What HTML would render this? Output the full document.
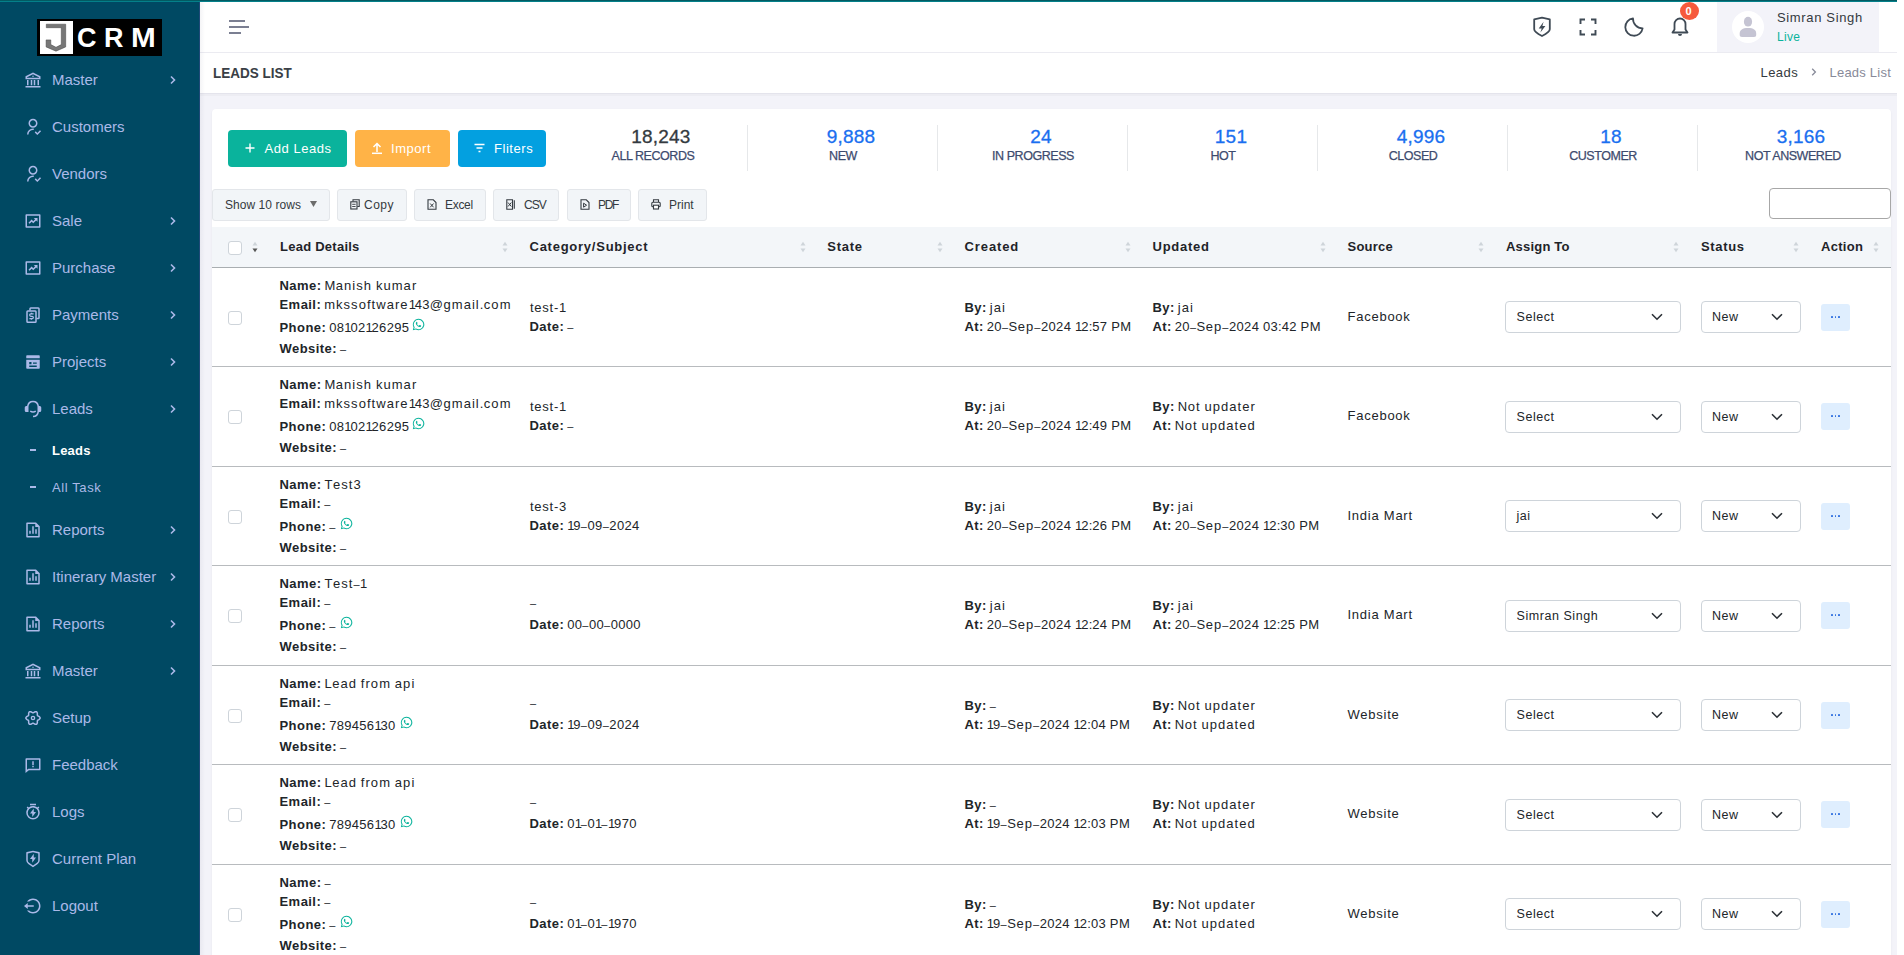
<!DOCTYPE html>
<html><head><meta charset="utf-8"><title>Leads List</title>
<style>
html,body{margin:0;padding:0;width:1904px;height:955px;overflow:hidden;background:#fff;}
body{position:relative;font-family:"Liberation Sans",sans-serif;}
.r{position:absolute;display:block;}
.t{position:absolute;white-space:nowrap;line-height:1;}
.c{text-align:center;white-space:nowrap;}
b{font-weight:700;}
</style></head><body>
<div class="r" style="left:0px;top:0px;width:200px;height:955px;background:#004963"></div>
<div class="r" style="left:200px;top:2px;width:1697px;height:953px;background:#f3f3f9"></div>
<div class="r" style="left:200px;top:2px;width:1697px;height:50px;background:#fff"></div>
<div class="r" style="left:200px;top:52px;width:1697px;height:1px;background:#ebebf1"></div>
<div class="r" style="left:200px;top:53px;width:1697px;height:40px;background:#fff"></div>
<div class="r" style="left:200px;top:93px;width:1697px;height:1px;background:#e4e4ec"></div>
<div class="r" style="left:200px;top:94px;width:1697px;height:2px;background:#ededf3"></div>
<div class="r" style="left:0px;top:0px;width:1897px;height:1px;background:#035a62"></div>
<div class="r" style="left:0px;top:1px;width:1897px;height:1px;background:#04808a"></div>
<div class="r" style="left:199px;top:2px;width:1px;height:953px;background:#1f4a78"></div>
<div class="r" style="left:200px;top:2px;width:5px;height:953px;background:linear-gradient(90deg,rgba(40,40,80,0.05),rgba(40,40,80,0))"></div>
<div class="r" style="left:37px;top:19px;width:125px;height:37px;background:#000"></div>
<div class="r" style="left:40px;top:21px;width:32.5px;height:32.5px;background:#fff"></div>
<svg class="r" style="left:38px;top:19px;" width="38" height="37" viewBox="38 19 38 37"><path d="M46.3 24.2 H65.7 V46.9 L56 51.2 L46.1 46.9 V39.9 H50.8 V44.6 L56 47.3 L61.3 44.6 V27.7 H46.3 Z" fill="#777" stroke="#444" stroke-width="0.5"/></svg>
<div class="t " style="left:77px;top:25px;font-size:27px;font-weight:700;color:#fff;letter-spacing:0px;">C</div>
<div class="t " style="left:104px;top:25px;font-size:27px;font-weight:700;color:#fff;letter-spacing:0px;">R</div>
<div class="t " style="left:131px;top:25px;font-size:27px;font-weight:700;color:#fff;letter-spacing:0px;transform:scaleX(1.1);transform-origin:0 0;">M</div>
<div class="t " style="left:52px;top:72px;font-size:15px;color:#abb9e8;">Master</div>
<svg class="r" style="left:24px;top:71px;color:#abb9e8" width="18" height="18" viewBox="0 0 24 24"><path fill="currentColor" d="M2 20h20v2H2v-2zm2-8h2v7H4v-7zm5 0h2v7H9v-7zm4 0h2v7h-2v-7zm5 0h2v7h-2v-7zM2 7l10-5 10 5v4H2V7zm2 1.236V9h16v-.764l-8-4-8 4zM12 8a1 1 0 1 1 0-2 1 1 0 0 1 0 2z"/></svg>
<svg class="r" style="left:168px;top:75px;" width="10" height="10" viewBox="0 0 10 10"><path d="M3 1.5 L6.5 5 L3 8.5" fill="none" stroke="#abb9e8" stroke-width="1.6"/></svg>
<div class="t " style="left:52px;top:119px;font-size:15px;color:#abb9e8;">Customers</div>
<svg class="r" style="left:24px;top:118px;color:#abb9e8" width="18" height="18" viewBox="0 0 24 24"><path fill="currentColor" d="M13 14.062v2.013A6 6 0 0 0 6 22H4a8 8 0 0 1 9-7.938zM12 13c-3.315 0-6-2.685-6-6s2.685-6 6-6 6 2.685 6 6-2.685 6-6 6zm0-2c2.21 0 4-1.79 4-4s-1.79-4-4-4-4 1.79-4 4 1.79 4 4 4zm5.793 8.914l3.535-3.535 1.415 1.414-4.95 4.95-3.536-3.536 1.415-1.414 2.12 2.121z"/></svg>
<div class="t " style="left:52px;top:166px;font-size:15px;color:#abb9e8;">Vendors</div>
<svg class="r" style="left:24px;top:165px;color:#abb9e8" width="18" height="18" viewBox="0 0 24 24"><path fill="currentColor" d="M13 14.062v2.013A6 6 0 0 0 6 22H4a8 8 0 0 1 9-7.938zM12 13c-3.315 0-6-2.685-6-6s2.685-6 6-6 6 2.685 6 6-2.685 6-6 6zm0-2c2.21 0 4-1.79 4-4s-1.79-4-4-4-4 1.79-4 4 1.79 4 4 4zm5.793 8.914l3.535-3.535 1.415 1.414-4.95 4.95-3.536-3.536 1.415-1.414 2.12 2.121z"/></svg>
<div class="t " style="left:52px;top:213px;font-size:15px;color:#abb9e8;">Sale</div>
<svg class="r" style="left:24px;top:212px;color:#abb9e8" width="18" height="18" viewBox="0 0 24 24"><path fill="currentColor" d="M4 5v14h16V5H4zM3 3h18a1 1 0 0 1 1 1v16a1 1 0 0 1-1 1H3a1 1 0 0 1-1-1V4a1 1 0 0 1 1-1zm11.793 6.793L13 8h5v5l-1.793-1.793-3.864 3.864-2.121-2.121-2.829 2.828-1.414-1.414 4.243-4.243 2.121 2.122 2.45-2.45z"/></svg>
<svg class="r" style="left:168px;top:216px;" width="10" height="10" viewBox="0 0 10 10"><path d="M3 1.5 L6.5 5 L3 8.5" fill="none" stroke="#abb9e8" stroke-width="1.6"/></svg>
<div class="t " style="left:52px;top:260px;font-size:15px;color:#abb9e8;">Purchase</div>
<svg class="r" style="left:24px;top:259px;color:#abb9e8" width="18" height="18" viewBox="0 0 24 24"><path fill="currentColor" d="M4 5v14h16V5H4zM3 3h18a1 1 0 0 1 1 1v16a1 1 0 0 1-1 1H3a1 1 0 0 1-1-1V4a1 1 0 0 1 1-1zm11.793 6.793L13 8h5v5l-1.793-1.793-3.864 3.864-2.121-2.121-2.829 2.828-1.414-1.414 4.243-4.243 2.121 2.122 2.45-2.45z"/></svg>
<svg class="r" style="left:168px;top:263px;" width="10" height="10" viewBox="0 0 10 10"><path d="M3 1.5 L6.5 5 L3 8.5" fill="none" stroke="#abb9e8" stroke-width="1.6"/></svg>
<div class="t " style="left:52px;top:307px;font-size:15px;color:#abb9e8;">Payments</div>
<svg class="r" style="left:24px;top:306px;color:#abb9e8" width="18" height="18" viewBox="0 0 24 24"><g fill="none" stroke="currentColor" stroke-width="2"><path d="M8 6V3.5a1 1 0 0 1 1-1h10a1 1 0 0 1 1 1v12a1 1 0 0 1-1 1h-2.5"/><rect x="4" y="6.5" width="12" height="15" rx="1"/></g><path fill="none" stroke="currentColor" stroke-width="1.7" d="M12.8 10.6H9.1A1.55 1.55 0 0 0 9.1 13.7H10.9A1.55 1.55 0 0 1 10.9 16.8H7.2M10 9V10.6M10 16.8V18.4"/></svg>
<svg class="r" style="left:168px;top:310px;" width="10" height="10" viewBox="0 0 10 10"><path d="M3 1.5 L6.5 5 L3 8.5" fill="none" stroke="#abb9e8" stroke-width="1.6"/></svg>
<div class="t " style="left:52px;top:354px;font-size:15px;color:#abb9e8;">Projects</div>
<svg class="r" style="left:24px;top:353px;color:#abb9e8" width="18" height="18" viewBox="0 0 24 24"><path fill="currentColor" fill-rule="evenodd" d="M4 3h16a1 1 0 0 1 1 1v3H3V4a1 1 0 0 1 1-1zM3 9h18v11a1 1 0 0 1-1 1H4a1 1 0 0 1-1-1V9zm4 3v3h3v-3H7zm5 0.8v1.6h5v-1.6h-5zM7 16.8v1.7h10v-1.7H7z"/></svg>
<svg class="r" style="left:168px;top:357px;" width="10" height="10" viewBox="0 0 10 10"><path d="M3 1.5 L6.5 5 L3 8.5" fill="none" stroke="#abb9e8" stroke-width="1.6"/></svg>
<div class="t " style="left:52px;top:401px;font-size:15px;color:#abb9e8;">Leads</div>
<svg class="r" style="left:24px;top:400px;color:#abb9e8" width="18" height="18" viewBox="0 0 24 24"><path fill="currentColor" d="M21 8a2 2 0 0 1 2 2v4a2 2 0 0 1-2 2h-1.062A8.001 8.001 0 0 1 12 23v-2a6 6 0 0 0 6-6V9A6 6 0 1 0 6 9v7H3a2 2 0 0 1-2-2v-4a2 2 0 0 1 2-2h1.062a8.001 8.001 0 0 1 15.876 0H21zM7.76 15.785l1.06-1.696A5.972 5.972 0 0 0 12 15a5.972 5.972 0 0 0 3.18-.911l1.06 1.696A7.963 7.963 0 0 1 12 17a7.963 7.963 0 0 1-4.24-1.215z"/></svg>
<svg class="r" style="left:168px;top:404px;" width="10" height="10" viewBox="0 0 10 10"><path d="M3 1.5 L6.5 5 L3 8.5" fill="none" stroke="#abb9e8" stroke-width="1.6"/></svg>
<div class="t " style="left:52px;top:522px;font-size:15px;color:#abb9e8;">Reports</div>
<svg class="r" style="left:24px;top:521px;color:#abb9e8" width="18" height="18" viewBox="0 0 24 24"><path fill="currentColor" d="M11 7h2v10h-2V7zm4 4h2v6h-2v-6zm-8 2h2v4H7v-4zm8-9H5v16h14V8h-4V4zM3 2.992C3 2.444 3.447 2 3.999 2H16l5 5v13.993A1 1 0 0 1 20.007 22H3.993A1 1 0 0 1 3 21.008V2.992z"/></svg>
<svg class="r" style="left:168px;top:525px;" width="10" height="10" viewBox="0 0 10 10"><path d="M3 1.5 L6.5 5 L3 8.5" fill="none" stroke="#abb9e8" stroke-width="1.6"/></svg>
<div class="t " style="left:52px;top:569px;font-size:15px;color:#abb9e8;">Itinerary Master</div>
<svg class="r" style="left:24px;top:568px;color:#abb9e8" width="18" height="18" viewBox="0 0 24 24"><path fill="currentColor" d="M11 7h2v10h-2V7zm4 4h2v6h-2v-6zm-8 2h2v4H7v-4zm8-9H5v16h14V8h-4V4zM3 2.992C3 2.444 3.447 2 3.999 2H16l5 5v13.993A1 1 0 0 1 20.007 22H3.993A1 1 0 0 1 3 21.008V2.992z"/></svg>
<svg class="r" style="left:168px;top:572px;" width="10" height="10" viewBox="0 0 10 10"><path d="M3 1.5 L6.5 5 L3 8.5" fill="none" stroke="#abb9e8" stroke-width="1.6"/></svg>
<div class="t " style="left:52px;top:616px;font-size:15px;color:#abb9e8;">Reports</div>
<svg class="r" style="left:24px;top:615px;color:#abb9e8" width="18" height="18" viewBox="0 0 24 24"><path fill="currentColor" d="M11 7h2v10h-2V7zm4 4h2v6h-2v-6zm-8 2h2v4H7v-4zm8-9H5v16h14V8h-4V4zM3 2.992C3 2.444 3.447 2 3.999 2H16l5 5v13.993A1 1 0 0 1 20.007 22H3.993A1 1 0 0 1 3 21.008V2.992z"/></svg>
<svg class="r" style="left:168px;top:619px;" width="10" height="10" viewBox="0 0 10 10"><path d="M3 1.5 L6.5 5 L3 8.5" fill="none" stroke="#abb9e8" stroke-width="1.6"/></svg>
<div class="t " style="left:52px;top:663px;font-size:15px;color:#abb9e8;">Master</div>
<svg class="r" style="left:24px;top:662px;color:#abb9e8" width="18" height="18" viewBox="0 0 24 24"><path fill="currentColor" d="M2 20h20v2H2v-2zm2-8h2v7H4v-7zm5 0h2v7H9v-7zm4 0h2v7h-2v-7zm5 0h2v7h-2v-7zM2 7l10-5 10 5v4H2V7zm2 1.236V9h16v-.764l-8-4-8 4zM12 8a1 1 0 1 1 0-2 1 1 0 0 1 0 2z"/></svg>
<svg class="r" style="left:168px;top:666px;" width="10" height="10" viewBox="0 0 10 10"><path d="M3 1.5 L6.5 5 L3 8.5" fill="none" stroke="#abb9e8" stroke-width="1.6"/></svg>
<div class="t " style="left:52px;top:710px;font-size:15px;color:#abb9e8;">Setup</div>
<svg class="r" style="left:24px;top:709px;color:#abb9e8" width="18" height="18" viewBox="0 0 24 24"><path fill="none" stroke="currentColor" stroke-width="2" stroke-linejoin="round" d="M21.50 12.00 L21.29 11.19 L20.72 10.46 L19.92 9.88 L19.09 9.42 L18.41 9.01 L17.98 8.55 L17.79 7.94 L17.78 7.15 L17.80 6.20 L17.69 5.22 L17.35 4.36 L16.75 3.77 L15.94 3.55 L15.03 3.68 L14.12 4.08 L13.31 4.56 L12.62 4.95 L12.00 5.10 L11.38 4.95 L10.69 4.56 L9.88 4.08 L8.97 3.68 L8.06 3.55 L7.25 3.77 L6.65 4.36 L6.31 5.22 L6.20 6.20 L6.22 7.15 L6.21 7.94 L6.02 8.55 L5.59 9.01 L4.91 9.42 L4.08 9.88 L3.28 10.46 L2.71 11.19 L2.50 12.00 L2.71 12.81 L3.28 13.54 L4.08 14.12 L4.91 14.58 L5.59 14.99 L6.02 15.45 L6.21 16.06 L6.22 16.85 L6.20 17.80 L6.31 18.78 L6.65 19.64 L7.25 20.23 L8.06 20.45 L8.97 20.32 L9.88 19.92 L10.69 19.44 L11.38 19.05 L12.00 18.90 L12.62 19.05 L13.31 19.44 L14.12 19.92 L15.03 20.32 L15.94 20.45 L16.75 20.23 L17.35 19.64 L17.69 18.78 L17.80 17.80 L17.78 16.85 L17.79 16.06 L17.98 15.45 L18.41 14.99 L19.09 14.58 L19.92 14.12 L20.72 13.54 L21.29 12.81 L21.50 12.00Z"/><circle cx="12" cy="12" r="2.2" fill="none" stroke="currentColor" stroke-width="1.8"/></svg>
<div class="t " style="left:52px;top:757px;font-size:15px;color:#abb9e8;">Feedback</div>
<svg class="r" style="left:24px;top:756px;color:#abb9e8" width="18" height="18" viewBox="0 0 24 24"><path fill="currentColor" d="M6.455 19L2 22.5V4a1 1 0 0 1 1-1h18a1 1 0 0 1 1 1v14a1 1 0 0 1-1 1H6.455zm-.692-2H20V5H4v13.385L5.763 17zM11 13h2v2h-2v-2zm0-6h2v5h-2V7z"/></svg>
<div class="t " style="left:52px;top:804px;font-size:15px;color:#abb9e8;">Logs</div>
<svg class="r" style="left:24px;top:803px;color:#abb9e8" width="18" height="18" viewBox="0 0 24 24"><path fill="currentColor" d="M6.382 5.968A8.962 8.962 0 0 1 12 4c2.125 0 4.078.736 5.618 1.968l1.453-1.453 1.414 1.414-1.453 1.453A8.962 8.962 0 0 1 21 13a9 9 0 1 1-18 0c0-2.125.736-4.078 1.968-5.618L3.515 5.93 4.93 4.515l1.453 1.453zM12 20a7 7 0 1 0 0-14 7 7 0 0 0 0 14zm1-8h3l-5 6.5V14H8l5-6.505V12zM8 1h8v2H8V1z"/></svg>
<div class="t " style="left:52px;top:851px;font-size:15px;color:#abb9e8;">Current Plan</div>
<svg class="r" style="left:24px;top:850px;color:#abb9e8" width="18" height="18" viewBox="0 0 24 24"><path fill="currentColor" d="M12 1l8.217 1.826c.457.102.783.507.783.976v9.987a6 6 0 0 1-2.672 4.992L12 23l-6.328-4.219A6 6 0 0 1 3 13.79V3.802c0-.469.326-.874.783-.976L12 1zm0 2.049L5 4.604v9.185a4 4 0 0 0 1.781 3.328L12 20.597l5.219-3.48A4 4 0 0 0 19 13.79V4.604L12 3.05zM13 10h3l-5 7v-5H8l5-7v5z"/></svg>
<div class="t " style="left:52px;top:898px;font-size:15px;color:#abb9e8;">Logout</div>
<svg class="r" style="left:24px;top:897px;color:#abb9e8" width="18" height="18" viewBox="0 0 24 24"><path fill="currentColor" d="M5 11h8v2H5v3l-5-4 5-4v3zm-1 7h2.708a8 8 0 1 0 0-12H4A9.985 9.985 0 0 1 12 2c5.523 0 10 4.477 10 10s-4.477 10-10 10a9.985 9.985 0 0 1-8-4z"/></svg>
<div class="r" style="left:30px;top:449px;width:6px;height:2px;background:#abb9e8"></div>
<div class="t " style="left:52px;top:444px;font-size:13px;font-weight:700;color:#fff;letter-spacing:0.2px;">Leads</div>
<div class="r" style="left:30px;top:486px;width:6px;height:2px;background:#abb9e8"></div>
<div class="t " style="left:52px;top:481px;font-size:13px;color:#abb9e8;letter-spacing:0.6px;">All Task</div>
<div class="r" style="left:229px;top:20px;width:16px;height:2px;background:#7b7f92"></div>
<div class="r" style="left:229px;top:26px;width:20px;height:2px;background:#7b7f92"></div>
<div class="r" style="left:229px;top:32px;width:12px;height:2px;background:#7b7f92"></div>
<svg class="r" style="left:1530px;top:15px;" width="24" height="24" viewBox="0 0 24 24"><path fill="none" stroke="#3f4a55" stroke-width="1.8" stroke-linejoin="round" d="M12 2.7 L19.8 4.4 V14.3 Q19.8 17 12 21 Q4.2 17 4.2 14.3 V4.4 Z"/><path fill="#3f4a55" d="M13.6 6.8 L8.7 13.6 H11.7 L10.4 17.6 L15.4 10.9 H12.4 Z"/></svg>
<svg class="r" style="left:1576px;top:15px;" width="24" height="24" viewBox="0 0 24 24"><path fill="none" stroke="#3f4a55" stroke-width="1.9" d="M4.5 9 V4.5 H9 M15 4.5 H19.5 V9 M19.5 15 V19.5 H15 M9 19.5 H4.5 V15"/></svg>
<svg class="r" style="left:1622px;top:15px;" width="24" height="24" viewBox="0 0 24 24"><path fill="none" stroke="#3f4a55" stroke-width="1.8" stroke-linejoin="round" d="M11 3.4 A8.7 8.7 0 1 0 20.6 13.4 A9.5 9.5 0 0 1 11 3.4 Z"/></svg>
<svg class="r" style="left:1668px;top:15px;" width="24" height="24" viewBox="0 0 24 24"><path fill="none" stroke="#3f4a55" stroke-width="1.8" stroke-linejoin="round" d="M12 3.5 A5.5 5.5 0 0 1 17.5 9 V14.5 L19.5 17.5 H4.5 L6.5 14.5 V9 A5.5 5.5 0 0 1 12 3.5 Z"/><path fill="#3f4a55" d="M10 19 H14 A2 2 0 0 1 10 19 Z"/></svg>
<div class="r" style="left:1679.5px;top:2px;width:19px;height:18px;border-radius:50%;background:#f65a3c"></div>
<div class="t " style="left:1685.5px;top:6px;font-size:11px;font-weight:700;color:#fff;letter-spacing:0px;">0</div>
<div class="r" style="left:1717px;top:2px;width:162px;height:50px;background:#f3f3f9"></div>
<div class="r" style="left:1732px;top:11px;width:32px;height:32px;border-radius:50%;background:#fff"></div>
<svg class="r" style="left:1732px;top:11px;" width="32" height="32" viewBox="1732 11 32 32"><ellipse cx="1748" cy="21.7" rx="4.1" ry="4.9" fill="#c5c4d3"/><path fill="#c5c4d3" d="M1739.7 33.5 C1739.7 30 1742.5 28.1 1748 28.1 C1753.5 28.1 1756.2 30 1756.2 33.5 V35 C1756.2 36.3 1755.5 37 1754 37 H1742 C1740.5 37 1739.7 36.3 1739.7 35 Z"/></svg>
<div class="t " style="left:1777px;top:11px;font-size:13px;color:#343a40;letter-spacing:0.65px;">Simran Singh</div>
<div class="t " style="left:1777px;top:30.5px;font-size:12px;color:#0ab39c;letter-spacing:0.3px;">Live</div>
<div class="t " style="left:213px;top:65px;font-size:15px;font-weight:700;color:#3a3f46;letter-spacing:0px;transform:scaleX(0.9);transform-origin:0 0;">LEADS LIST</div>
<div class="t " style="left:1760.5px;top:66px;font-size:13px;color:#343a40;letter-spacing:0.45px;">Leads</div>
<svg class="r" style="left:1809px;top:67px;" width="10" height="10" viewBox="0 0 10 10"><path d="M3.2 1.8 L6.4 5 L3.2 8.2" fill="none" stroke="#878a99" stroke-width="1.3"/></svg>
<div class="t " style="left:1829.5px;top:66px;font-size:13px;color:#878a99;letter-spacing:0.22px;">Leads List</div>
<div class="r" style="left:212px;top:109px;width:1679px;height:900px;background:#fff;border-radius:4px;box-shadow:0 1px 2px rgba(56,65,74,0.08)"></div>
<div class="r" style="left:228px;top:130px;width:119px;height:37px;background:#0ab39c;border-radius:4px"></div>
<svg class="r" style="left:245px;top:143px" width="10" height="10" viewBox="0 0 10 10"><path d="M5 0.5V9.5M0.5 5H9.5" stroke="#fff" stroke-width="1.4"/></svg>
<div class="t " style="left:264.5px;top:142px;font-size:13px;color:#fff;letter-spacing:0.55px;">Add Leads</div>
<div class="r" style="left:355px;top:130px;width:95px;height:37px;background:#ffb347;border-radius:4px"></div>
<svg class="r" style="left:371px;top:141px" width="12" height="14" viewBox="0 0 12 14"><path d="M6 11V2.5M2.5 6L6 2.5L9.5 6" fill="none" stroke="#fff" stroke-width="1.5"/><path d="M1 12.3H11" stroke="#fff" stroke-width="1.5"/></svg>
<div class="t " style="left:391px;top:142px;font-size:13px;color:#fff;letter-spacing:0.55px;">Import</div>
<div class="r" style="left:458px;top:130px;width:88px;height:37px;background:#03a0e0;border-radius:4px"></div>
<svg class="r" style="left:474px;top:143px" width="11" height="10" viewBox="0 0 11 10"><path d="M0.5 1.5H10.5M2.5 5H8.5M4.5 8.5H6.5" stroke="#fff" stroke-width="1.4"/></svg>
<div class="t " style="left:494px;top:142px;font-size:13px;color:#fff;letter-spacing:0.55px;">Fliters</div>
<div class="r c" style="left:566px;top:127px;width:190px;font-size:19px;line-height:19px;color:#343a40;letter-spacing:0.2px;-webkit-text-stroke:0.3px #343a40">18,243</div>
<div class="r c" style="left:558px;top:149.5px;width:190px;font-size:12.5px;line-height:12.5px;color:#3d4b6e;letter-spacing:-0.45px;-webkit-text-stroke:0.25px #3d4b6e">ALL RECORDS</div>
<div class="r c" style="left:756px;top:127px;width:190px;font-size:19px;line-height:19px;color:#1a6ff0;letter-spacing:0.2px;-webkit-text-stroke:0.3px #1a6ff0">9,888</div>
<div class="r c" style="left:748px;top:149.5px;width:190px;font-size:12.5px;line-height:12.5px;color:#3d4b6e;letter-spacing:-0.45px;-webkit-text-stroke:0.25px #3d4b6e">NEW</div>
<div class="r" style="left:747px;top:125px;width:1px;height:46px;background:#e6e8ea"></div>
<div class="r c" style="left:946px;top:127px;width:190px;font-size:19px;line-height:19px;color:#1a6ff0;letter-spacing:0.2px;-webkit-text-stroke:0.3px #1a6ff0">24</div>
<div class="r c" style="left:938px;top:149.5px;width:190px;font-size:12.5px;line-height:12.5px;color:#3d4b6e;letter-spacing:-0.45px;-webkit-text-stroke:0.25px #3d4b6e">IN PROGRESS</div>
<div class="r" style="left:937px;top:125px;width:1px;height:46px;background:#e6e8ea"></div>
<div class="r c" style="left:1136px;top:127px;width:190px;font-size:19px;line-height:19px;color:#1a6ff0;letter-spacing:0.2px;-webkit-text-stroke:0.3px #1a6ff0">151</div>
<div class="r c" style="left:1128px;top:149.5px;width:190px;font-size:12.5px;line-height:12.5px;color:#3d4b6e;letter-spacing:-0.45px;-webkit-text-stroke:0.25px #3d4b6e">HOT</div>
<div class="r" style="left:1127px;top:125px;width:1px;height:46px;background:#e6e8ea"></div>
<div class="r c" style="left:1326px;top:127px;width:190px;font-size:19px;line-height:19px;color:#1a6ff0;letter-spacing:0.2px;-webkit-text-stroke:0.3px #1a6ff0">4,996</div>
<div class="r c" style="left:1318px;top:149.5px;width:190px;font-size:12.5px;line-height:12.5px;color:#3d4b6e;letter-spacing:-0.45px;-webkit-text-stroke:0.25px #3d4b6e">CLOSED</div>
<div class="r" style="left:1317px;top:125px;width:1px;height:46px;background:#e6e8ea"></div>
<div class="r c" style="left:1516px;top:127px;width:190px;font-size:19px;line-height:19px;color:#1a6ff0;letter-spacing:0.2px;-webkit-text-stroke:0.3px #1a6ff0">18</div>
<div class="r c" style="left:1508px;top:149.5px;width:190px;font-size:12.5px;line-height:12.5px;color:#3d4b6e;letter-spacing:-0.45px;-webkit-text-stroke:0.25px #3d4b6e">CUSTOMER</div>
<div class="r" style="left:1507px;top:125px;width:1px;height:46px;background:#e6e8ea"></div>
<div class="r c" style="left:1706px;top:127px;width:190px;font-size:19px;line-height:19px;color:#1a6ff0;letter-spacing:0.2px;-webkit-text-stroke:0.3px #1a6ff0">3,166</div>
<div class="r c" style="left:1698px;top:149.5px;width:190px;font-size:12.5px;line-height:12.5px;color:#3d4b6e;letter-spacing:-0.45px;-webkit-text-stroke:0.25px #3d4b6e">NOT ANSWERED</div>
<div class="r" style="left:1697px;top:125px;width:1px;height:46px;background:#e6e8ea"></div>
<div class="r" style="left:212px;top:189px;width:118px;height:32px;background:#f2f5f8;border:1px solid #e3e6ea;border-radius:3px;box-sizing:border-box"></div>
<div class="t " style="left:225px;top:199px;font-size:12px;color:#343a40;letter-spacing:0.05px;">Show 10 rows</div>
<svg class="r" style="left:310px;top:201px;" width="7" height="6" viewBox="0 0 7 6"><path d="M0 0H7L3.5 6Z" fill="#6c6c6c"/></svg>
<div class="r" style="left:337px;top:189px;width:70px;height:32px;background:#f2f5f8;border:1px solid #e3e6ea;border-radius:3px;box-sizing:border-box"></div>
<svg class="r" style="left:350px;top:199px" width="10" height="11" viewBox="0 0 10 11"><path d="M3 2.5V0.8H9.2V7.5H7.3" fill="none" stroke="#343a40" stroke-width="1.1"/><rect x="0.8" y="2.8" width="6.2" height="7.2" fill="none" stroke="#343a40" stroke-width="1.1"/><path d="M2.2 5.3H5.6M2.2 7.5H5.6" stroke="#343a40" stroke-width="0.9"/></svg>
<div class="t " style="left:364px;top:199px;font-size:12px;color:#343a40;letter-spacing:0.5px;">Copy</div>
<div class="r" style="left:414px;top:189px;width:72px;height:32px;background:#f2f5f8;border:1px solid #e3e6ea;border-radius:3px;box-sizing:border-box"></div>
<svg class="r" style="left:427px;top:199px" width="10" height="11" viewBox="0 0 10 11"><path d="M1 0.8H6.3L9 3.5V10.2H1Z" fill="none" stroke="#343a40" stroke-width="1.1"/><path d="M3.2 4.5L6.6 8.3M6.6 4.5L3.2 8.3" stroke="#343a40" stroke-width="1"/></svg>
<div class="t " style="left:445px;top:199px;font-size:12px;color:#343a40;letter-spacing:-0.3px;">Excel</div>
<div class="r" style="left:493px;top:189px;width:66px;height:32px;background:#f2f5f8;border:1px solid #e3e6ea;border-radius:3px;box-sizing:border-box"></div>
<svg class="r" style="left:506px;top:199px" width="10" height="11" viewBox="0 0 10 11"><path d="M0.8 0.8H6.5V10.2H0.8Z" fill="none" stroke="#343a40" stroke-width="1.1"/><path d="M8.3 1.2V9.8" stroke="#343a40" stroke-width="1.1"/><path d="M2 3.5L5.3 7.5M5.3 3.5L2 7.5" stroke="#343a40" stroke-width="1"/></svg>
<div class="t " style="left:524px;top:199px;font-size:12px;color:#343a40;letter-spacing:-1.0px;">CSV</div>
<div class="r" style="left:567px;top:189px;width:64px;height:32px;background:#f2f5f8;border:1px solid #e3e6ea;border-radius:3px;box-sizing:border-box"></div>
<svg class="r" style="left:580px;top:199px" width="10" height="11" viewBox="0 0 10 11"><path d="M1 0.8H6.3L9 3.5V10.2H1Z" fill="none" stroke="#343a40" stroke-width="1.1"/><path d="M3.6 4.2V8.2L6.6 6.2Z" fill="none" stroke="#343a40" stroke-width="1"/></svg>
<div class="t " style="left:598px;top:199px;font-size:12px;color:#343a40;letter-spacing:-1.3px;">PDF</div>
<div class="r" style="left:638px;top:189px;width:69px;height:32px;background:#f2f5f8;border:1px solid #e3e6ea;border-radius:3px;box-sizing:border-box"></div>
<svg class="r" style="left:651px;top:199px" width="10" height="11" viewBox="0 0 10 11"><path d="M2.5 3V0.8H7.5V3" fill="none" stroke="#343a40" stroke-width="1.1"/><rect x="0.8" y="3.2" width="8.4" height="4.6" rx="1" fill="none" stroke="#343a40" stroke-width="1.1"/><rect x="2.5" y="6.2" width="5" height="3.8" fill="#fff" stroke="#343a40" stroke-width="1.1"/></svg>
<div class="t " style="left:669px;top:199px;font-size:12px;color:#343a40;letter-spacing:0.0px;">Print</div>
<div class="r" style="left:1769px;top:188px;width:122px;height:31px;border:1px solid #a7a7a7;border-radius:4px;box-sizing:border-box;background:#fff"></div>
<div class="r" style="left:212px;top:227px;width:1679px;height:40px;background:#f3f6f9"></div>
<div class="r" style="left:212px;top:267px;width:1679px;height:1px;background:#a9aeb1"></div>
<div class="r" style="left:228px;top:241px;width:14px;height:14px;box-sizing:border-box;border:1px solid #ced4da;border-radius:3px;background:#fff"></div>
<div class="t " style="left:280px;top:240px;font-size:13px;font-weight:700;color:#1f2429;letter-spacing:0.25px;">Lead Details</div>
<div class="t " style="left:529.5px;top:240px;font-size:13px;font-weight:700;color:#1f2429;letter-spacing:0.75px;">Category/Subject</div>
<div class="t " style="left:827.3px;top:240px;font-size:13px;font-weight:700;color:#1f2429;letter-spacing:0.75px;">State</div>
<div class="t " style="left:964.5px;top:240px;font-size:13px;font-weight:700;color:#1f2429;letter-spacing:0.9px;">Created</div>
<div class="t " style="left:1152.5px;top:240px;font-size:13px;font-weight:700;color:#1f2429;letter-spacing:0.75px;">Updated</div>
<div class="t " style="left:1347.5px;top:240px;font-size:13px;font-weight:700;color:#1f2429;letter-spacing:0.25px;">Source</div>
<div class="t " style="left:1506px;top:240px;font-size:13px;font-weight:700;color:#1f2429;letter-spacing:0.2px;">Assign To</div>
<div class="t " style="left:1701px;top:240px;font-size:13px;font-weight:700;color:#1f2429;letter-spacing:0.65px;">Status</div>
<div class="t " style="left:1821px;top:240px;font-size:13px;font-weight:700;color:#1f2429;letter-spacing:0.3px;">Action</div>
<svg class="r" style="left:251.5px;top:241px;" width="6" height="12" viewBox="0 0 6 12"><path d="M3 0.8L5.5 4.5H0.5Z" fill="#ced4da"/><path d="M3 11.2L5.5 7.5H0.5Z" fill="#555"/></svg>
<svg class="r" style="left:501.5px;top:241px;" width="6" height="12" viewBox="0 0 6 12"><path d="M3 0.8L5.5 4.5H0.5Z" fill="#ced4da"/><path d="M3 11.2L5.5 7.5H0.5Z" fill="#ced4da"/></svg>
<svg class="r" style="left:799.5px;top:241px;" width="6" height="12" viewBox="0 0 6 12"><path d="M3 0.8L5.5 4.5H0.5Z" fill="#ced4da"/><path d="M3 11.2L5.5 7.5H0.5Z" fill="#ced4da"/></svg>
<svg class="r" style="left:937px;top:241px;" width="6" height="12" viewBox="0 0 6 12"><path d="M3 0.8L5.5 4.5H0.5Z" fill="#ced4da"/><path d="M3 11.2L5.5 7.5H0.5Z" fill="#ced4da"/></svg>
<svg class="r" style="left:1125px;top:241px;" width="6" height="12" viewBox="0 0 6 12"><path d="M3 0.8L5.5 4.5H0.5Z" fill="#ced4da"/><path d="M3 11.2L5.5 7.5H0.5Z" fill="#ced4da"/></svg>
<svg class="r" style="left:1319.5px;top:241px;" width="6" height="12" viewBox="0 0 6 12"><path d="M3 0.8L5.5 4.5H0.5Z" fill="#ced4da"/><path d="M3 11.2L5.5 7.5H0.5Z" fill="#ced4da"/></svg>
<svg class="r" style="left:1478px;top:241px;" width="6" height="12" viewBox="0 0 6 12"><path d="M3 0.8L5.5 4.5H0.5Z" fill="#ced4da"/><path d="M3 11.2L5.5 7.5H0.5Z" fill="#ced4da"/></svg>
<svg class="r" style="left:1673px;top:241px;" width="6" height="12" viewBox="0 0 6 12"><path d="M3 0.8L5.5 4.5H0.5Z" fill="#ced4da"/><path d="M3 11.2L5.5 7.5H0.5Z" fill="#ced4da"/></svg>
<svg class="r" style="left:1793px;top:241px;" width="6" height="12" viewBox="0 0 6 12"><path d="M3 0.8L5.5 4.5H0.5Z" fill="#ced4da"/><path d="M3 11.2L5.5 7.5H0.5Z" fill="#ced4da"/></svg>
<svg class="r" style="left:1873px;top:241px;" width="6" height="12" viewBox="0 0 6 12"><path d="M3 0.8L5.5 4.5H0.5Z" fill="#ced4da"/><path d="M3 11.2L5.5 7.5H0.5Z" fill="#ced4da"/></svg>
<div class="r" style="left:212px;top:366px;width:1679px;height:1px;background:#b8bbbe"></div>
<div class="r" style="left:228px;top:311px;width:14px;height:14px;box-sizing:border-box;border:1px solid #ced4da;border-radius:3px;background:#fff"></div>
<div class="t" style="left:279.5px;top:279px;font-size:13px;color:#212529"><b style="letter-spacing:0.45px">Name:</b><span style="letter-spacing:-0.7px"> </span><span style="letter-spacing:0.5px">M</span><span style="letter-spacing:1.05px">anish</span><span style="letter-spacing:0.2px"> </span><span style="letter-spacing:1.05px">kumar</span></div>
<div class="t" style="left:279.5px;top:298px;font-size:13px;color:#212529"><b style="letter-spacing:0.45px">Email:</b><span style="letter-spacing:-0.7px"> </span><span style="letter-spacing:1.05px">mkssoftware</span><span style="letter-spacing:-1.1px">1</span><span style="letter-spacing:0.3px">43</span><span style="letter-spacing:0.4px">@</span><span style="letter-spacing:1.05px">gmail</span><span style="letter-spacing:0.4px">.</span><span style="letter-spacing:1.05px">com</span></div>
<div class="t" style="left:279.5px;top:321px;font-size:13px;color:#212529"><b style="letter-spacing:0.45px">Phone:</b><span style="letter-spacing:-0.7px"> </span><span style="letter-spacing:0.3px">08</span><span style="letter-spacing:-1.1px">1</span><span style="letter-spacing:0.3px">02</span><span style="letter-spacing:-1.1px">1</span><span style="letter-spacing:0.3px">26295</span></div>
<div class="t" style="left:279.5px;top:342px;font-size:13px;color:#212529"><b style="letter-spacing:0.45px">Website:</b><span style="letter-spacing:-0.7px"> </span><span style="letter-spacing:0.6px"><span style="font-size:11px;position:relative;top:-0.5px">&#8211;</span></span></div>
<svg class="r" style="left:412.1px;top:318.2px" width="13" height="13" viewBox="0 0 24 24"><path fill="#0ab39c" d="M12 1.5A10.5 10.5 0 0 0 2.9 17.2L1.5 22.5L7 21.1A10.5 10.5 0 1 0 12 1.5Zm0 1.8a8.7 8.7 0 1 1-4.5 16.1l-.3-.2-3.2.9.9-3.1-.2-.3A8.7 8.7 0 0 1 12 3.3Z"/><path fill="#0ab39c" d="M8.6 6.8c.3 0 .5 0 .7.5l.9 2.1c.1.3 0 .5-.1.7l-.6.7c-.2.2-.2.4 0 .6.5.9 1.2 1.7 2.1 2.3.3.2.6.4 1 .5.2.1.4 0 .6-.2l.7-.9c.2-.2.4-.3.7-.2l2 .9c.3.1.5.3.4.7-.1.8-.6 1.7-1.5 2-.8.3-1.9.2-3.5-.5-2-.9-3.6-2.7-4.5-4.4-.6-1.2-.6-2.3 0-3.2.4-.5.7-.8 1.1-.8Z"/></svg>
<div class="t " style="left:530px;top:301px;font-size:13px;color:#212529;letter-spacing:0.75px;">test-1</div>
<div class="t" style="left:529.5px;top:320px;font-size:13px;color:#212529"><b style="letter-spacing:0.45px">Date:</b><span style="letter-spacing:-0.7px"> </span><span style="letter-spacing:0.6px"><span style="font-size:11px;position:relative;top:-0.5px">&#8211;</span></span></div>
<div class="t" style="left:964.5px;top:301px;font-size:13px;color:#212529"><b style="letter-spacing:0.45px">By:</b><span style="letter-spacing:-0.7px"> </span><span style="letter-spacing:1.05px">jai</span></div>
<div class="t" style="left:964.5px;top:320px;font-size:13px;color:#212529"><b style="letter-spacing:0.45px">At:</b><span style="letter-spacing:-0.7px"> </span><span style="letter-spacing:0.3px">20</span><span style="letter-spacing:0.6px"><span style="font-size:11px;position:relative;top:-0.5px">&#8211;</span></span><span style="letter-spacing:0.5px">S</span><span style="letter-spacing:1.05px">ep</span><span style="letter-spacing:0.6px"><span style="font-size:11px;position:relative;top:-0.5px">&#8211;</span></span><span style="letter-spacing:0.3px">2024</span><span style="letter-spacing:0.2px"> </span><span style="letter-spacing:-1.1px">1</span><span style="letter-spacing:0.3px">2</span><span style="letter-spacing:0.0px">:</span><span style="letter-spacing:0.3px">57</span><span style="letter-spacing:0.2px"> </span><span style="letter-spacing:0.5px">PM</span></div>
<div class="t" style="left:1152.5px;top:301px;font-size:13px;color:#212529"><b style="letter-spacing:0.45px">By:</b><span style="letter-spacing:-0.7px"> </span><span style="letter-spacing:1.05px">jai</span></div>
<div class="t" style="left:1152.5px;top:320px;font-size:13px;color:#212529"><b style="letter-spacing:0.45px">At:</b><span style="letter-spacing:-0.7px"> </span><span style="letter-spacing:0.3px">20</span><span style="letter-spacing:0.6px"><span style="font-size:11px;position:relative;top:-0.5px">&#8211;</span></span><span style="letter-spacing:0.5px">S</span><span style="letter-spacing:1.05px">ep</span><span style="letter-spacing:0.6px"><span style="font-size:11px;position:relative;top:-0.5px">&#8211;</span></span><span style="letter-spacing:0.3px">2024</span><span style="letter-spacing:0.2px"> </span><span style="letter-spacing:0.3px">03</span><span style="letter-spacing:0.0px">:</span><span style="letter-spacing:0.3px">42</span><span style="letter-spacing:0.2px"> </span><span style="letter-spacing:0.5px">PM</span></div>
<div class="t " style="left:1347.5px;top:310px;font-size:13px;color:#212529;letter-spacing:0.75px;">Facebook</div>
<div class="r" style="left:1505px;top:301px;width:176px;height:32px;border:1px solid #ced4da;border-radius:4px;box-sizing:border-box;background:#fff"></div>
<div class="t " style="left:1516.5px;top:310.5px;font-size:12.5px;color:#212529;letter-spacing:0.55px;">Select</div>
<svg class="r" style="left:1651px;top:313px" width="12" height="8" viewBox="0 0 12 8"><path d="M1 1.2L6 6.2L11 1.2" fill="none" stroke="#2b3036" stroke-width="1.6"/></svg>
<div class="r" style="left:1701px;top:301px;width:100px;height:32px;border:1px solid #ced4da;border-radius:4px;box-sizing:border-box;background:#fff"></div>
<div class="t " style="left:1712px;top:310.5px;font-size:12.5px;color:#212529;letter-spacing:0.55px;">New</div>
<svg class="r" style="left:1771px;top:313px" width="12" height="8" viewBox="0 0 12 8"><path d="M1 1.2L6 6.2L11 1.2" fill="none" stroke="#2b3036" stroke-width="1.6"/></svg>
<div class="r" style="left:1821px;top:304px;width:29px;height:27px;background:#dfeefe;border-radius:3px"></div>
<div class="r" style="left:1831.3px;top:316.2px;width:1.7px;height:1.7px;background:#2f6fe0;border-radius:50%"></div>
<div class="r" style="left:1834.6px;top:316.2px;width:1.7px;height:1.7px;background:#2f6fe0;border-radius:50%"></div>
<div class="r" style="left:1837.8999999999999px;top:316.2px;width:1.7px;height:1.7px;background:#2f6fe0;border-radius:50%"></div>
<div class="r" style="left:212px;top:466px;width:1679px;height:1px;background:#b8bbbe"></div>
<div class="r" style="left:228px;top:410px;width:14px;height:14px;box-sizing:border-box;border:1px solid #ced4da;border-radius:3px;background:#fff"></div>
<div class="t" style="left:279.5px;top:378px;font-size:13px;color:#212529"><b style="letter-spacing:0.45px">Name:</b><span style="letter-spacing:-0.7px"> </span><span style="letter-spacing:0.5px">M</span><span style="letter-spacing:1.05px">anish</span><span style="letter-spacing:0.2px"> </span><span style="letter-spacing:1.05px">kumar</span></div>
<div class="t" style="left:279.5px;top:397px;font-size:13px;color:#212529"><b style="letter-spacing:0.45px">Email:</b><span style="letter-spacing:-0.7px"> </span><span style="letter-spacing:1.05px">mkssoftware</span><span style="letter-spacing:-1.1px">1</span><span style="letter-spacing:0.3px">43</span><span style="letter-spacing:0.4px">@</span><span style="letter-spacing:1.05px">gmail</span><span style="letter-spacing:0.4px">.</span><span style="letter-spacing:1.05px">com</span></div>
<div class="t" style="left:279.5px;top:420px;font-size:13px;color:#212529"><b style="letter-spacing:0.45px">Phone:</b><span style="letter-spacing:-0.7px"> </span><span style="letter-spacing:0.3px">08</span><span style="letter-spacing:-1.1px">1</span><span style="letter-spacing:0.3px">02</span><span style="letter-spacing:-1.1px">1</span><span style="letter-spacing:0.3px">26295</span></div>
<div class="t" style="left:279.5px;top:441px;font-size:13px;color:#212529"><b style="letter-spacing:0.45px">Website:</b><span style="letter-spacing:-0.7px"> </span><span style="letter-spacing:0.6px"><span style="font-size:11px;position:relative;top:-0.5px">&#8211;</span></span></div>
<svg class="r" style="left:412.1px;top:417.2px" width="13" height="13" viewBox="0 0 24 24"><path fill="#0ab39c" d="M12 1.5A10.5 10.5 0 0 0 2.9 17.2L1.5 22.5L7 21.1A10.5 10.5 0 1 0 12 1.5Zm0 1.8a8.7 8.7 0 1 1-4.5 16.1l-.3-.2-3.2.9.9-3.1-.2-.3A8.7 8.7 0 0 1 12 3.3Z"/><path fill="#0ab39c" d="M8.6 6.8c.3 0 .5 0 .7.5l.9 2.1c.1.3 0 .5-.1.7l-.6.7c-.2.2-.2.4 0 .6.5.9 1.2 1.7 2.1 2.3.3.2.6.4 1 .5.2.1.4 0 .6-.2l.7-.9c.2-.2.4-.3.7-.2l2 .9c.3.1.5.3.4.7-.1.8-.6 1.7-1.5 2-.8.3-1.9.2-3.5-.5-2-.9-3.6-2.7-4.5-4.4-.6-1.2-.6-2.3 0-3.2.4-.5.7-.8 1.1-.8Z"/></svg>
<div class="t " style="left:530px;top:400px;font-size:13px;color:#212529;letter-spacing:0.75px;">test-1</div>
<div class="t" style="left:529.5px;top:419px;font-size:13px;color:#212529"><b style="letter-spacing:0.45px">Date:</b><span style="letter-spacing:-0.7px"> </span><span style="letter-spacing:0.6px"><span style="font-size:11px;position:relative;top:-0.5px">&#8211;</span></span></div>
<div class="t" style="left:964.5px;top:400px;font-size:13px;color:#212529"><b style="letter-spacing:0.45px">By:</b><span style="letter-spacing:-0.7px"> </span><span style="letter-spacing:1.05px">jai</span></div>
<div class="t" style="left:964.5px;top:419px;font-size:13px;color:#212529"><b style="letter-spacing:0.45px">At:</b><span style="letter-spacing:-0.7px"> </span><span style="letter-spacing:0.3px">20</span><span style="letter-spacing:0.6px"><span style="font-size:11px;position:relative;top:-0.5px">&#8211;</span></span><span style="letter-spacing:0.5px">S</span><span style="letter-spacing:1.05px">ep</span><span style="letter-spacing:0.6px"><span style="font-size:11px;position:relative;top:-0.5px">&#8211;</span></span><span style="letter-spacing:0.3px">2024</span><span style="letter-spacing:0.2px"> </span><span style="letter-spacing:-1.1px">1</span><span style="letter-spacing:0.3px">2</span><span style="letter-spacing:0.0px">:</span><span style="letter-spacing:0.3px">49</span><span style="letter-spacing:0.2px"> </span><span style="letter-spacing:0.5px">PM</span></div>
<div class="t" style="left:1152.5px;top:400px;font-size:13px;color:#212529"><b style="letter-spacing:0.45px">By:</b><span style="letter-spacing:-0.7px"> </span><span style="letter-spacing:0.5px">N</span><span style="letter-spacing:1.05px">ot</span><span style="letter-spacing:0.2px"> </span><span style="letter-spacing:1.05px">updater</span></div>
<div class="t" style="left:1152.5px;top:419px;font-size:13px;color:#212529"><b style="letter-spacing:0.45px">At:</b><span style="letter-spacing:-0.7px"> </span><span style="letter-spacing:0.5px">N</span><span style="letter-spacing:1.05px">ot</span><span style="letter-spacing:0.2px"> </span><span style="letter-spacing:1.05px">updated</span></div>
<div class="t " style="left:1347.5px;top:409px;font-size:13px;color:#212529;letter-spacing:0.75px;">Facebook</div>
<div class="r" style="left:1505px;top:401px;width:176px;height:32px;border:1px solid #ced4da;border-radius:4px;box-sizing:border-box;background:#fff"></div>
<div class="t " style="left:1516.5px;top:410.5px;font-size:12.5px;color:#212529;letter-spacing:0.55px;">Select</div>
<svg class="r" style="left:1651px;top:413px" width="12" height="8" viewBox="0 0 12 8"><path d="M1 1.2L6 6.2L11 1.2" fill="none" stroke="#2b3036" stroke-width="1.6"/></svg>
<div class="r" style="left:1701px;top:401px;width:100px;height:32px;border:1px solid #ced4da;border-radius:4px;box-sizing:border-box;background:#fff"></div>
<div class="t " style="left:1712px;top:410.5px;font-size:12.5px;color:#212529;letter-spacing:0.55px;">New</div>
<svg class="r" style="left:1771px;top:413px" width="12" height="8" viewBox="0 0 12 8"><path d="M1 1.2L6 6.2L11 1.2" fill="none" stroke="#2b3036" stroke-width="1.6"/></svg>
<div class="r" style="left:1821px;top:403px;width:29px;height:27px;background:#dfeefe;border-radius:3px"></div>
<div class="r" style="left:1831.3px;top:415.2px;width:1.7px;height:1.7px;background:#2f6fe0;border-radius:50%"></div>
<div class="r" style="left:1834.6px;top:415.2px;width:1.7px;height:1.7px;background:#2f6fe0;border-radius:50%"></div>
<div class="r" style="left:1837.8999999999999px;top:415.2px;width:1.7px;height:1.7px;background:#2f6fe0;border-radius:50%"></div>
<div class="r" style="left:212px;top:565px;width:1679px;height:1px;background:#b8bbbe"></div>
<div class="r" style="left:228px;top:510px;width:14px;height:14px;box-sizing:border-box;border:1px solid #ced4da;border-radius:3px;background:#fff"></div>
<div class="t" style="left:279.5px;top:478px;font-size:13px;color:#212529"><b style="letter-spacing:0.45px">Name:</b><span style="letter-spacing:-0.7px"> </span><span style="letter-spacing:0.5px">T</span><span style="letter-spacing:1.05px">est</span><span style="letter-spacing:0.3px">3</span></div>
<div class="t" style="left:279.5px;top:497px;font-size:13px;color:#212529"><b style="letter-spacing:0.45px">Email:</b><span style="letter-spacing:-0.7px"> </span><span style="letter-spacing:0.6px"><span style="font-size:11px;position:relative;top:-0.5px">&#8211;</span></span></div>
<div class="t" style="left:279.5px;top:520px;font-size:13px;color:#212529"><b style="letter-spacing:0.45px">Phone:</b><span style="letter-spacing:-0.7px"> </span><span style="letter-spacing:0.6px"><span style="font-size:11px;position:relative;top:-0.5px">&#8211;</span></span></div>
<div class="t" style="left:279.5px;top:541px;font-size:13px;color:#212529"><b style="letter-spacing:0.45px">Website:</b><span style="letter-spacing:-0.7px"> </span><span style="letter-spacing:0.6px"><span style="font-size:11px;position:relative;top:-0.5px">&#8211;</span></span></div>
<svg class="r" style="left:339.6px;top:517.2px" width="13" height="13" viewBox="0 0 24 24"><path fill="#0ab39c" d="M12 1.5A10.5 10.5 0 0 0 2.9 17.2L1.5 22.5L7 21.1A10.5 10.5 0 1 0 12 1.5Zm0 1.8a8.7 8.7 0 1 1-4.5 16.1l-.3-.2-3.2.9.9-3.1-.2-.3A8.7 8.7 0 0 1 12 3.3Z"/><path fill="#0ab39c" d="M8.6 6.8c.3 0 .5 0 .7.5l.9 2.1c.1.3 0 .5-.1.7l-.6.7c-.2.2-.2.4 0 .6.5.9 1.2 1.7 2.1 2.3.3.2.6.4 1 .5.2.1.4 0 .6-.2l.7-.9c.2-.2.4-.3.7-.2l2 .9c.3.1.5.3.4.7-.1.8-.6 1.7-1.5 2-.8.3-1.9.2-3.5-.5-2-.9-3.6-2.7-4.5-4.4-.6-1.2-.6-2.3 0-3.2.4-.5.7-.8 1.1-.8Z"/></svg>
<div class="t " style="left:530px;top:500px;font-size:13px;color:#212529;letter-spacing:0.75px;">test-3</div>
<div class="t" style="left:529.5px;top:519px;font-size:13px;color:#212529"><b style="letter-spacing:0.45px">Date:</b><span style="letter-spacing:-0.7px"> </span><span style="letter-spacing:-1.1px">1</span><span style="letter-spacing:0.3px">9</span><span style="letter-spacing:0.6px"><span style="font-size:11px;position:relative;top:-0.5px">&#8211;</span></span><span style="letter-spacing:0.3px">09</span><span style="letter-spacing:0.6px"><span style="font-size:11px;position:relative;top:-0.5px">&#8211;</span></span><span style="letter-spacing:0.3px">2024</span></div>
<div class="t" style="left:964.5px;top:500px;font-size:13px;color:#212529"><b style="letter-spacing:0.45px">By:</b><span style="letter-spacing:-0.7px"> </span><span style="letter-spacing:1.05px">jai</span></div>
<div class="t" style="left:964.5px;top:519px;font-size:13px;color:#212529"><b style="letter-spacing:0.45px">At:</b><span style="letter-spacing:-0.7px"> </span><span style="letter-spacing:0.3px">20</span><span style="letter-spacing:0.6px"><span style="font-size:11px;position:relative;top:-0.5px">&#8211;</span></span><span style="letter-spacing:0.5px">S</span><span style="letter-spacing:1.05px">ep</span><span style="letter-spacing:0.6px"><span style="font-size:11px;position:relative;top:-0.5px">&#8211;</span></span><span style="letter-spacing:0.3px">2024</span><span style="letter-spacing:0.2px"> </span><span style="letter-spacing:-1.1px">1</span><span style="letter-spacing:0.3px">2</span><span style="letter-spacing:0.0px">:</span><span style="letter-spacing:0.3px">26</span><span style="letter-spacing:0.2px"> </span><span style="letter-spacing:0.5px">PM</span></div>
<div class="t" style="left:1152.5px;top:500px;font-size:13px;color:#212529"><b style="letter-spacing:0.45px">By:</b><span style="letter-spacing:-0.7px"> </span><span style="letter-spacing:1.05px">jai</span></div>
<div class="t" style="left:1152.5px;top:519px;font-size:13px;color:#212529"><b style="letter-spacing:0.45px">At:</b><span style="letter-spacing:-0.7px"> </span><span style="letter-spacing:0.3px">20</span><span style="letter-spacing:0.6px"><span style="font-size:11px;position:relative;top:-0.5px">&#8211;</span></span><span style="letter-spacing:0.5px">S</span><span style="letter-spacing:1.05px">ep</span><span style="letter-spacing:0.6px"><span style="font-size:11px;position:relative;top:-0.5px">&#8211;</span></span><span style="letter-spacing:0.3px">2024</span><span style="letter-spacing:0.2px"> </span><span style="letter-spacing:-1.1px">1</span><span style="letter-spacing:0.3px">2</span><span style="letter-spacing:0.0px">:</span><span style="letter-spacing:0.3px">30</span><span style="letter-spacing:0.2px"> </span><span style="letter-spacing:0.5px">PM</span></div>
<div class="t " style="left:1347.5px;top:509px;font-size:13px;color:#212529;letter-spacing:0.75px;">India Mart</div>
<div class="r" style="left:1505px;top:500px;width:176px;height:32px;border:1px solid #ced4da;border-radius:4px;box-sizing:border-box;background:#fff"></div>
<div class="t " style="left:1516.5px;top:509.5px;font-size:12.5px;color:#212529;letter-spacing:0.55px;">jai</div>
<svg class="r" style="left:1651px;top:512px" width="12" height="8" viewBox="0 0 12 8"><path d="M1 1.2L6 6.2L11 1.2" fill="none" stroke="#2b3036" stroke-width="1.6"/></svg>
<div class="r" style="left:1701px;top:500px;width:100px;height:32px;border:1px solid #ced4da;border-radius:4px;box-sizing:border-box;background:#fff"></div>
<div class="t " style="left:1712px;top:509.5px;font-size:12.5px;color:#212529;letter-spacing:0.55px;">New</div>
<svg class="r" style="left:1771px;top:512px" width="12" height="8" viewBox="0 0 12 8"><path d="M1 1.2L6 6.2L11 1.2" fill="none" stroke="#2b3036" stroke-width="1.6"/></svg>
<div class="r" style="left:1821px;top:503px;width:29px;height:27px;background:#dfeefe;border-radius:3px"></div>
<div class="r" style="left:1831.3px;top:515.2px;width:1.7px;height:1.7px;background:#2f6fe0;border-radius:50%"></div>
<div class="r" style="left:1834.6px;top:515.2px;width:1.7px;height:1.7px;background:#2f6fe0;border-radius:50%"></div>
<div class="r" style="left:1837.8999999999999px;top:515.2px;width:1.7px;height:1.7px;background:#2f6fe0;border-radius:50%"></div>
<div class="r" style="left:212px;top:665px;width:1679px;height:1px;background:#b8bbbe"></div>
<div class="r" style="left:228px;top:609px;width:14px;height:14px;box-sizing:border-box;border:1px solid #ced4da;border-radius:3px;background:#fff"></div>
<div class="t" style="left:279.5px;top:577px;font-size:13px;color:#212529"><b style="letter-spacing:0.45px">Name:</b><span style="letter-spacing:-0.7px"> </span><span style="letter-spacing:0.5px">T</span><span style="letter-spacing:1.05px">est</span><span style="letter-spacing:0.6px"><span style="font-size:11px;position:relative;top:-0.5px">&#8211;</span></span><span style="letter-spacing:-1.1px">1</span></div>
<div class="t" style="left:279.5px;top:596px;font-size:13px;color:#212529"><b style="letter-spacing:0.45px">Email:</b><span style="letter-spacing:-0.7px"> </span><span style="letter-spacing:0.6px"><span style="font-size:11px;position:relative;top:-0.5px">&#8211;</span></span></div>
<div class="t" style="left:279.5px;top:619px;font-size:13px;color:#212529"><b style="letter-spacing:0.45px">Phone:</b><span style="letter-spacing:-0.7px"> </span><span style="letter-spacing:0.6px"><span style="font-size:11px;position:relative;top:-0.5px">&#8211;</span></span></div>
<div class="t" style="left:279.5px;top:640px;font-size:13px;color:#212529"><b style="letter-spacing:0.45px">Website:</b><span style="letter-spacing:-0.7px"> </span><span style="letter-spacing:0.6px"><span style="font-size:11px;position:relative;top:-0.5px">&#8211;</span></span></div>
<svg class="r" style="left:339.6px;top:616.2px" width="13" height="13" viewBox="0 0 24 24"><path fill="#0ab39c" d="M12 1.5A10.5 10.5 0 0 0 2.9 17.2L1.5 22.5L7 21.1A10.5 10.5 0 1 0 12 1.5Zm0 1.8a8.7 8.7 0 1 1-4.5 16.1l-.3-.2-3.2.9.9-3.1-.2-.3A8.7 8.7 0 0 1 12 3.3Z"/><path fill="#0ab39c" d="M8.6 6.8c.3 0 .5 0 .7.5l.9 2.1c.1.3 0 .5-.1.7l-.6.7c-.2.2-.2.4 0 .6.5.9 1.2 1.7 2.1 2.3.3.2.6.4 1 .5.2.1.4 0 .6-.2l.7-.9c.2-.2.4-.3.7-.2l2 .9c.3.1.5.3.4.7-.1.8-.6 1.7-1.5 2-.8.3-1.9.2-3.5-.5-2-.9-3.6-2.7-4.5-4.4-.6-1.2-.6-2.3 0-3.2.4-.5.7-.8 1.1-.8Z"/></svg>
<div class="t " style="left:530px;top:599px;font-size:13px;color:#212529;"><span style="font-size:11px;position:relative;top:-3px">&#8211;</span></div>
<div class="t" style="left:529.5px;top:618px;font-size:13px;color:#212529"><b style="letter-spacing:0.45px">Date:</b><span style="letter-spacing:-0.7px"> </span><span style="letter-spacing:0.3px">00</span><span style="letter-spacing:0.6px"><span style="font-size:11px;position:relative;top:-0.5px">&#8211;</span></span><span style="letter-spacing:0.3px">00</span><span style="letter-spacing:0.6px"><span style="font-size:11px;position:relative;top:-0.5px">&#8211;</span></span><span style="letter-spacing:0.3px">0000</span></div>
<div class="t" style="left:964.5px;top:599px;font-size:13px;color:#212529"><b style="letter-spacing:0.45px">By:</b><span style="letter-spacing:-0.7px"> </span><span style="letter-spacing:1.05px">jai</span></div>
<div class="t" style="left:964.5px;top:618px;font-size:13px;color:#212529"><b style="letter-spacing:0.45px">At:</b><span style="letter-spacing:-0.7px"> </span><span style="letter-spacing:0.3px">20</span><span style="letter-spacing:0.6px"><span style="font-size:11px;position:relative;top:-0.5px">&#8211;</span></span><span style="letter-spacing:0.5px">S</span><span style="letter-spacing:1.05px">ep</span><span style="letter-spacing:0.6px"><span style="font-size:11px;position:relative;top:-0.5px">&#8211;</span></span><span style="letter-spacing:0.3px">2024</span><span style="letter-spacing:0.2px"> </span><span style="letter-spacing:-1.1px">1</span><span style="letter-spacing:0.3px">2</span><span style="letter-spacing:0.0px">:</span><span style="letter-spacing:0.3px">24</span><span style="letter-spacing:0.2px"> </span><span style="letter-spacing:0.5px">PM</span></div>
<div class="t" style="left:1152.5px;top:599px;font-size:13px;color:#212529"><b style="letter-spacing:0.45px">By:</b><span style="letter-spacing:-0.7px"> </span><span style="letter-spacing:1.05px">jai</span></div>
<div class="t" style="left:1152.5px;top:618px;font-size:13px;color:#212529"><b style="letter-spacing:0.45px">At:</b><span style="letter-spacing:-0.7px"> </span><span style="letter-spacing:0.3px">20</span><span style="letter-spacing:0.6px"><span style="font-size:11px;position:relative;top:-0.5px">&#8211;</span></span><span style="letter-spacing:0.5px">S</span><span style="letter-spacing:1.05px">ep</span><span style="letter-spacing:0.6px"><span style="font-size:11px;position:relative;top:-0.5px">&#8211;</span></span><span style="letter-spacing:0.3px">2024</span><span style="letter-spacing:0.2px"> </span><span style="letter-spacing:-1.1px">1</span><span style="letter-spacing:0.3px">2</span><span style="letter-spacing:0.0px">:</span><span style="letter-spacing:0.3px">25</span><span style="letter-spacing:0.2px"> </span><span style="letter-spacing:0.5px">PM</span></div>
<div class="t " style="left:1347.5px;top:608px;font-size:13px;color:#212529;letter-spacing:0.75px;">India Mart</div>
<div class="r" style="left:1505px;top:600px;width:176px;height:32px;border:1px solid #ced4da;border-radius:4px;box-sizing:border-box;background:#fff"></div>
<div class="t " style="left:1516.5px;top:609.5px;font-size:12.5px;color:#212529;letter-spacing:0.55px;">Simran Singh</div>
<svg class="r" style="left:1651px;top:612px" width="12" height="8" viewBox="0 0 12 8"><path d="M1 1.2L6 6.2L11 1.2" fill="none" stroke="#2b3036" stroke-width="1.6"/></svg>
<div class="r" style="left:1701px;top:600px;width:100px;height:32px;border:1px solid #ced4da;border-radius:4px;box-sizing:border-box;background:#fff"></div>
<div class="t " style="left:1712px;top:609.5px;font-size:12.5px;color:#212529;letter-spacing:0.55px;">New</div>
<svg class="r" style="left:1771px;top:612px" width="12" height="8" viewBox="0 0 12 8"><path d="M1 1.2L6 6.2L11 1.2" fill="none" stroke="#2b3036" stroke-width="1.6"/></svg>
<div class="r" style="left:1821px;top:602px;width:29px;height:27px;background:#dfeefe;border-radius:3px"></div>
<div class="r" style="left:1831.3px;top:614.2px;width:1.7px;height:1.7px;background:#2f6fe0;border-radius:50%"></div>
<div class="r" style="left:1834.6px;top:614.2px;width:1.7px;height:1.7px;background:#2f6fe0;border-radius:50%"></div>
<div class="r" style="left:1837.8999999999999px;top:614.2px;width:1.7px;height:1.7px;background:#2f6fe0;border-radius:50%"></div>
<div class="r" style="left:212px;top:764px;width:1679px;height:1px;background:#b8bbbe"></div>
<div class="r" style="left:228px;top:709px;width:14px;height:14px;box-sizing:border-box;border:1px solid #ced4da;border-radius:3px;background:#fff"></div>
<div class="t" style="left:279.5px;top:677px;font-size:13px;color:#212529"><b style="letter-spacing:0.45px">Name:</b><span style="letter-spacing:-0.7px"> </span><span style="letter-spacing:0.5px">L</span><span style="letter-spacing:1.05px">ead</span><span style="letter-spacing:0.2px"> </span><span style="letter-spacing:1.05px">from</span><span style="letter-spacing:0.2px"> </span><span style="letter-spacing:1.05px">api</span></div>
<div class="t" style="left:279.5px;top:696px;font-size:13px;color:#212529"><b style="letter-spacing:0.45px">Email:</b><span style="letter-spacing:-0.7px"> </span><span style="letter-spacing:0.6px"><span style="font-size:11px;position:relative;top:-0.5px">&#8211;</span></span></div>
<div class="t" style="left:279.5px;top:719px;font-size:13px;color:#212529"><b style="letter-spacing:0.45px">Phone:</b><span style="letter-spacing:-0.7px"> </span><span style="letter-spacing:0.3px">789456</span><span style="letter-spacing:-1.1px">1</span><span style="letter-spacing:0.3px">30</span></div>
<div class="t" style="left:279.5px;top:740px;font-size:13px;color:#212529"><b style="letter-spacing:0.45px">Website:</b><span style="letter-spacing:-0.7px"> </span><span style="letter-spacing:0.6px"><span style="font-size:11px;position:relative;top:-0.5px">&#8211;</span></span></div>
<svg class="r" style="left:400.1px;top:716.2px" width="13" height="13" viewBox="0 0 24 24"><path fill="#0ab39c" d="M12 1.5A10.5 10.5 0 0 0 2.9 17.2L1.5 22.5L7 21.1A10.5 10.5 0 1 0 12 1.5Zm0 1.8a8.7 8.7 0 1 1-4.5 16.1l-.3-.2-3.2.9.9-3.1-.2-.3A8.7 8.7 0 0 1 12 3.3Z"/><path fill="#0ab39c" d="M8.6 6.8c.3 0 .5 0 .7.5l.9 2.1c.1.3 0 .5-.1.7l-.6.7c-.2.2-.2.4 0 .6.5.9 1.2 1.7 2.1 2.3.3.2.6.4 1 .5.2.1.4 0 .6-.2l.7-.9c.2-.2.4-.3.7-.2l2 .9c.3.1.5.3.4.7-.1.8-.6 1.7-1.5 2-.8.3-1.9.2-3.5-.5-2-.9-3.6-2.7-4.5-4.4-.6-1.2-.6-2.3 0-3.2.4-.5.7-.8 1.1-.8Z"/></svg>
<div class="t " style="left:530px;top:699px;font-size:13px;color:#212529;"><span style="font-size:11px;position:relative;top:-3px">&#8211;</span></div>
<div class="t" style="left:529.5px;top:718px;font-size:13px;color:#212529"><b style="letter-spacing:0.45px">Date:</b><span style="letter-spacing:-0.7px"> </span><span style="letter-spacing:-1.1px">1</span><span style="letter-spacing:0.3px">9</span><span style="letter-spacing:0.6px"><span style="font-size:11px;position:relative;top:-0.5px">&#8211;</span></span><span style="letter-spacing:0.3px">09</span><span style="letter-spacing:0.6px"><span style="font-size:11px;position:relative;top:-0.5px">&#8211;</span></span><span style="letter-spacing:0.3px">2024</span></div>
<div class="t" style="left:964.5px;top:699px;font-size:13px;color:#212529"><b style="letter-spacing:0.45px">By:</b><span style="letter-spacing:-0.7px"> </span><span style="letter-spacing:0.6px"><span style="font-size:11px;position:relative;top:-0.5px">&#8211;</span></span></div>
<div class="t" style="left:964.5px;top:718px;font-size:13px;color:#212529"><b style="letter-spacing:0.45px">At:</b><span style="letter-spacing:-0.7px"> </span><span style="letter-spacing:-1.1px">1</span><span style="letter-spacing:0.3px">9</span><span style="letter-spacing:0.6px"><span style="font-size:11px;position:relative;top:-0.5px">&#8211;</span></span><span style="letter-spacing:0.5px">S</span><span style="letter-spacing:1.05px">ep</span><span style="letter-spacing:0.6px"><span style="font-size:11px;position:relative;top:-0.5px">&#8211;</span></span><span style="letter-spacing:0.3px">2024</span><span style="letter-spacing:0.2px"> </span><span style="letter-spacing:-1.1px">1</span><span style="letter-spacing:0.3px">2</span><span style="letter-spacing:0.0px">:</span><span style="letter-spacing:0.3px">04</span><span style="letter-spacing:0.2px"> </span><span style="letter-spacing:0.5px">PM</span></div>
<div class="t" style="left:1152.5px;top:699px;font-size:13px;color:#212529"><b style="letter-spacing:0.45px">By:</b><span style="letter-spacing:-0.7px"> </span><span style="letter-spacing:0.5px">N</span><span style="letter-spacing:1.05px">ot</span><span style="letter-spacing:0.2px"> </span><span style="letter-spacing:1.05px">updater</span></div>
<div class="t" style="left:1152.5px;top:718px;font-size:13px;color:#212529"><b style="letter-spacing:0.45px">At:</b><span style="letter-spacing:-0.7px"> </span><span style="letter-spacing:0.5px">N</span><span style="letter-spacing:1.05px">ot</span><span style="letter-spacing:0.2px"> </span><span style="letter-spacing:1.05px">updated</span></div>
<div class="t " style="left:1347.5px;top:708px;font-size:13px;color:#212529;letter-spacing:0.75px;">Website</div>
<div class="r" style="left:1505px;top:699px;width:176px;height:32px;border:1px solid #ced4da;border-radius:4px;box-sizing:border-box;background:#fff"></div>
<div class="t " style="left:1516.5px;top:708.5px;font-size:12.5px;color:#212529;letter-spacing:0.55px;">Select</div>
<svg class="r" style="left:1651px;top:711px" width="12" height="8" viewBox="0 0 12 8"><path d="M1 1.2L6 6.2L11 1.2" fill="none" stroke="#2b3036" stroke-width="1.6"/></svg>
<div class="r" style="left:1701px;top:699px;width:100px;height:32px;border:1px solid #ced4da;border-radius:4px;box-sizing:border-box;background:#fff"></div>
<div class="t " style="left:1712px;top:708.5px;font-size:12.5px;color:#212529;letter-spacing:0.55px;">New</div>
<svg class="r" style="left:1771px;top:711px" width="12" height="8" viewBox="0 0 12 8"><path d="M1 1.2L6 6.2L11 1.2" fill="none" stroke="#2b3036" stroke-width="1.6"/></svg>
<div class="r" style="left:1821px;top:702px;width:29px;height:27px;background:#dfeefe;border-radius:3px"></div>
<div class="r" style="left:1831.3px;top:714.2px;width:1.7px;height:1.7px;background:#2f6fe0;border-radius:50%"></div>
<div class="r" style="left:1834.6px;top:714.2px;width:1.7px;height:1.7px;background:#2f6fe0;border-radius:50%"></div>
<div class="r" style="left:1837.8999999999999px;top:714.2px;width:1.7px;height:1.7px;background:#2f6fe0;border-radius:50%"></div>
<div class="r" style="left:212px;top:864px;width:1679px;height:1px;background:#b8bbbe"></div>
<div class="r" style="left:228px;top:808px;width:14px;height:14px;box-sizing:border-box;border:1px solid #ced4da;border-radius:3px;background:#fff"></div>
<div class="t" style="left:279.5px;top:776px;font-size:13px;color:#212529"><b style="letter-spacing:0.45px">Name:</b><span style="letter-spacing:-0.7px"> </span><span style="letter-spacing:0.5px">L</span><span style="letter-spacing:1.05px">ead</span><span style="letter-spacing:0.2px"> </span><span style="letter-spacing:1.05px">from</span><span style="letter-spacing:0.2px"> </span><span style="letter-spacing:1.05px">api</span></div>
<div class="t" style="left:279.5px;top:795px;font-size:13px;color:#212529"><b style="letter-spacing:0.45px">Email:</b><span style="letter-spacing:-0.7px"> </span><span style="letter-spacing:0.6px"><span style="font-size:11px;position:relative;top:-0.5px">&#8211;</span></span></div>
<div class="t" style="left:279.5px;top:818px;font-size:13px;color:#212529"><b style="letter-spacing:0.45px">Phone:</b><span style="letter-spacing:-0.7px"> </span><span style="letter-spacing:0.3px">789456</span><span style="letter-spacing:-1.1px">1</span><span style="letter-spacing:0.3px">30</span></div>
<div class="t" style="left:279.5px;top:839px;font-size:13px;color:#212529"><b style="letter-spacing:0.45px">Website:</b><span style="letter-spacing:-0.7px"> </span><span style="letter-spacing:0.6px"><span style="font-size:11px;position:relative;top:-0.5px">&#8211;</span></span></div>
<svg class="r" style="left:400.1px;top:815.2px" width="13" height="13" viewBox="0 0 24 24"><path fill="#0ab39c" d="M12 1.5A10.5 10.5 0 0 0 2.9 17.2L1.5 22.5L7 21.1A10.5 10.5 0 1 0 12 1.5Zm0 1.8a8.7 8.7 0 1 1-4.5 16.1l-.3-.2-3.2.9.9-3.1-.2-.3A8.7 8.7 0 0 1 12 3.3Z"/><path fill="#0ab39c" d="M8.6 6.8c.3 0 .5 0 .7.5l.9 2.1c.1.3 0 .5-.1.7l-.6.7c-.2.2-.2.4 0 .6.5.9 1.2 1.7 2.1 2.3.3.2.6.4 1 .5.2.1.4 0 .6-.2l.7-.9c.2-.2.4-.3.7-.2l2 .9c.3.1.5.3.4.7-.1.8-.6 1.7-1.5 2-.8.3-1.9.2-3.5-.5-2-.9-3.6-2.7-4.5-4.4-.6-1.2-.6-2.3 0-3.2.4-.5.7-.8 1.1-.8Z"/></svg>
<div class="t " style="left:530px;top:798px;font-size:13px;color:#212529;"><span style="font-size:11px;position:relative;top:-3px">&#8211;</span></div>
<div class="t" style="left:529.5px;top:817px;font-size:13px;color:#212529"><b style="letter-spacing:0.45px">Date:</b><span style="letter-spacing:-0.7px"> </span><span style="letter-spacing:0.3px">0</span><span style="letter-spacing:-1.1px">1</span><span style="letter-spacing:0.6px"><span style="font-size:11px;position:relative;top:-0.5px">&#8211;</span></span><span style="letter-spacing:0.3px">0</span><span style="letter-spacing:-1.1px">1</span><span style="letter-spacing:0.6px"><span style="font-size:11px;position:relative;top:-0.5px">&#8211;</span></span><span style="letter-spacing:-1.1px">1</span><span style="letter-spacing:0.3px">970</span></div>
<div class="t" style="left:964.5px;top:798px;font-size:13px;color:#212529"><b style="letter-spacing:0.45px">By:</b><span style="letter-spacing:-0.7px"> </span><span style="letter-spacing:0.6px"><span style="font-size:11px;position:relative;top:-0.5px">&#8211;</span></span></div>
<div class="t" style="left:964.5px;top:817px;font-size:13px;color:#212529"><b style="letter-spacing:0.45px">At:</b><span style="letter-spacing:-0.7px"> </span><span style="letter-spacing:-1.1px">1</span><span style="letter-spacing:0.3px">9</span><span style="letter-spacing:0.6px"><span style="font-size:11px;position:relative;top:-0.5px">&#8211;</span></span><span style="letter-spacing:0.5px">S</span><span style="letter-spacing:1.05px">ep</span><span style="letter-spacing:0.6px"><span style="font-size:11px;position:relative;top:-0.5px">&#8211;</span></span><span style="letter-spacing:0.3px">2024</span><span style="letter-spacing:0.2px"> </span><span style="letter-spacing:-1.1px">1</span><span style="letter-spacing:0.3px">2</span><span style="letter-spacing:0.0px">:</span><span style="letter-spacing:0.3px">03</span><span style="letter-spacing:0.2px"> </span><span style="letter-spacing:0.5px">PM</span></div>
<div class="t" style="left:1152.5px;top:798px;font-size:13px;color:#212529"><b style="letter-spacing:0.45px">By:</b><span style="letter-spacing:-0.7px"> </span><span style="letter-spacing:0.5px">N</span><span style="letter-spacing:1.05px">ot</span><span style="letter-spacing:0.2px"> </span><span style="letter-spacing:1.05px">updater</span></div>
<div class="t" style="left:1152.5px;top:817px;font-size:13px;color:#212529"><b style="letter-spacing:0.45px">At:</b><span style="letter-spacing:-0.7px"> </span><span style="letter-spacing:0.5px">N</span><span style="letter-spacing:1.05px">ot</span><span style="letter-spacing:0.2px"> </span><span style="letter-spacing:1.05px">updated</span></div>
<div class="t " style="left:1347.5px;top:807px;font-size:13px;color:#212529;letter-spacing:0.75px;">Website</div>
<div class="r" style="left:1505px;top:799px;width:176px;height:32px;border:1px solid #ced4da;border-radius:4px;box-sizing:border-box;background:#fff"></div>
<div class="t " style="left:1516.5px;top:808.5px;font-size:12.5px;color:#212529;letter-spacing:0.55px;">Select</div>
<svg class="r" style="left:1651px;top:811px" width="12" height="8" viewBox="0 0 12 8"><path d="M1 1.2L6 6.2L11 1.2" fill="none" stroke="#2b3036" stroke-width="1.6"/></svg>
<div class="r" style="left:1701px;top:799px;width:100px;height:32px;border:1px solid #ced4da;border-radius:4px;box-sizing:border-box;background:#fff"></div>
<div class="t " style="left:1712px;top:808.5px;font-size:12.5px;color:#212529;letter-spacing:0.55px;">New</div>
<svg class="r" style="left:1771px;top:811px" width="12" height="8" viewBox="0 0 12 8"><path d="M1 1.2L6 6.2L11 1.2" fill="none" stroke="#2b3036" stroke-width="1.6"/></svg>
<div class="r" style="left:1821px;top:801px;width:29px;height:27px;background:#dfeefe;border-radius:3px"></div>
<div class="r" style="left:1831.3px;top:813.2px;width:1.7px;height:1.7px;background:#2f6fe0;border-radius:50%"></div>
<div class="r" style="left:1834.6px;top:813.2px;width:1.7px;height:1.7px;background:#2f6fe0;border-radius:50%"></div>
<div class="r" style="left:1837.8999999999999px;top:813.2px;width:1.7px;height:1.7px;background:#2f6fe0;border-radius:50%"></div>
<div class="r" style="left:228px;top:908px;width:14px;height:14px;box-sizing:border-box;border:1px solid #ced4da;border-radius:3px;background:#fff"></div>
<div class="t" style="left:279.5px;top:876px;font-size:13px;color:#212529"><b style="letter-spacing:0.45px">Name:</b><span style="letter-spacing:-0.7px"> </span><span style="letter-spacing:0.6px"><span style="font-size:11px;position:relative;top:-0.5px">&#8211;</span></span></div>
<div class="t" style="left:279.5px;top:895px;font-size:13px;color:#212529"><b style="letter-spacing:0.45px">Email:</b><span style="letter-spacing:-0.7px"> </span><span style="letter-spacing:0.6px"><span style="font-size:11px;position:relative;top:-0.5px">&#8211;</span></span></div>
<div class="t" style="left:279.5px;top:918px;font-size:13px;color:#212529"><b style="letter-spacing:0.45px">Phone:</b><span style="letter-spacing:-0.7px"> </span><span style="letter-spacing:0.6px"><span style="font-size:11px;position:relative;top:-0.5px">&#8211;</span></span></div>
<div class="t" style="left:279.5px;top:939px;font-size:13px;color:#212529"><b style="letter-spacing:0.45px">Website:</b><span style="letter-spacing:-0.7px"> </span><span style="letter-spacing:0.6px"><span style="font-size:11px;position:relative;top:-0.5px">&#8211;</span></span></div>
<svg class="r" style="left:339.6px;top:915.2px" width="13" height="13" viewBox="0 0 24 24"><path fill="#0ab39c" d="M12 1.5A10.5 10.5 0 0 0 2.9 17.2L1.5 22.5L7 21.1A10.5 10.5 0 1 0 12 1.5Zm0 1.8a8.7 8.7 0 1 1-4.5 16.1l-.3-.2-3.2.9.9-3.1-.2-.3A8.7 8.7 0 0 1 12 3.3Z"/><path fill="#0ab39c" d="M8.6 6.8c.3 0 .5 0 .7.5l.9 2.1c.1.3 0 .5-.1.7l-.6.7c-.2.2-.2.4 0 .6.5.9 1.2 1.7 2.1 2.3.3.2.6.4 1 .5.2.1.4 0 .6-.2l.7-.9c.2-.2.4-.3.7-.2l2 .9c.3.1.5.3.4.7-.1.8-.6 1.7-1.5 2-.8.3-1.9.2-3.5-.5-2-.9-3.6-2.7-4.5-4.4-.6-1.2-.6-2.3 0-3.2.4-.5.7-.8 1.1-.8Z"/></svg>
<div class="t " style="left:530px;top:898px;font-size:13px;color:#212529;"><span style="font-size:11px;position:relative;top:-3px">&#8211;</span></div>
<div class="t" style="left:529.5px;top:917px;font-size:13px;color:#212529"><b style="letter-spacing:0.45px">Date:</b><span style="letter-spacing:-0.7px"> </span><span style="letter-spacing:0.3px">0</span><span style="letter-spacing:-1.1px">1</span><span style="letter-spacing:0.6px"><span style="font-size:11px;position:relative;top:-0.5px">&#8211;</span></span><span style="letter-spacing:0.3px">0</span><span style="letter-spacing:-1.1px">1</span><span style="letter-spacing:0.6px"><span style="font-size:11px;position:relative;top:-0.5px">&#8211;</span></span><span style="letter-spacing:-1.1px">1</span><span style="letter-spacing:0.3px">970</span></div>
<div class="t" style="left:964.5px;top:898px;font-size:13px;color:#212529"><b style="letter-spacing:0.45px">By:</b><span style="letter-spacing:-0.7px"> </span><span style="letter-spacing:0.6px"><span style="font-size:11px;position:relative;top:-0.5px">&#8211;</span></span></div>
<div class="t" style="left:964.5px;top:917px;font-size:13px;color:#212529"><b style="letter-spacing:0.45px">At:</b><span style="letter-spacing:-0.7px"> </span><span style="letter-spacing:-1.1px">1</span><span style="letter-spacing:0.3px">9</span><span style="letter-spacing:0.6px"><span style="font-size:11px;position:relative;top:-0.5px">&#8211;</span></span><span style="letter-spacing:0.5px">S</span><span style="letter-spacing:1.05px">ep</span><span style="letter-spacing:0.6px"><span style="font-size:11px;position:relative;top:-0.5px">&#8211;</span></span><span style="letter-spacing:0.3px">2024</span><span style="letter-spacing:0.2px"> </span><span style="letter-spacing:-1.1px">1</span><span style="letter-spacing:0.3px">2</span><span style="letter-spacing:0.0px">:</span><span style="letter-spacing:0.3px">03</span><span style="letter-spacing:0.2px"> </span><span style="letter-spacing:0.5px">PM</span></div>
<div class="t" style="left:1152.5px;top:898px;font-size:13px;color:#212529"><b style="letter-spacing:0.45px">By:</b><span style="letter-spacing:-0.7px"> </span><span style="letter-spacing:0.5px">N</span><span style="letter-spacing:1.05px">ot</span><span style="letter-spacing:0.2px"> </span><span style="letter-spacing:1.05px">updater</span></div>
<div class="t" style="left:1152.5px;top:917px;font-size:13px;color:#212529"><b style="letter-spacing:0.45px">At:</b><span style="letter-spacing:-0.7px"> </span><span style="letter-spacing:0.5px">N</span><span style="letter-spacing:1.05px">ot</span><span style="letter-spacing:0.2px"> </span><span style="letter-spacing:1.05px">updated</span></div>
<div class="t " style="left:1347.5px;top:907px;font-size:13px;color:#212529;letter-spacing:0.75px;">Website</div>
<div class="r" style="left:1505px;top:898px;width:176px;height:32px;border:1px solid #ced4da;border-radius:4px;box-sizing:border-box;background:#fff"></div>
<div class="t " style="left:1516.5px;top:907.5px;font-size:12.5px;color:#212529;letter-spacing:0.55px;">Select</div>
<svg class="r" style="left:1651px;top:910px" width="12" height="8" viewBox="0 0 12 8"><path d="M1 1.2L6 6.2L11 1.2" fill="none" stroke="#2b3036" stroke-width="1.6"/></svg>
<div class="r" style="left:1701px;top:898px;width:100px;height:32px;border:1px solid #ced4da;border-radius:4px;box-sizing:border-box;background:#fff"></div>
<div class="t " style="left:1712px;top:907.5px;font-size:12.5px;color:#212529;letter-spacing:0.55px;">New</div>
<svg class="r" style="left:1771px;top:910px" width="12" height="8" viewBox="0 0 12 8"><path d="M1 1.2L6 6.2L11 1.2" fill="none" stroke="#2b3036" stroke-width="1.6"/></svg>
<div class="r" style="left:1821px;top:901px;width:29px;height:27px;background:#dfeefe;border-radius:3px"></div>
<div class="r" style="left:1831.3px;top:913.2px;width:1.7px;height:1.7px;background:#2f6fe0;border-radius:50%"></div>
<div class="r" style="left:1834.6px;top:913.2px;width:1.7px;height:1.7px;background:#2f6fe0;border-radius:50%"></div>
<div class="r" style="left:1837.8999999999999px;top:913.2px;width:1.7px;height:1.7px;background:#2f6fe0;border-radius:50%"></div>
</body></html>
